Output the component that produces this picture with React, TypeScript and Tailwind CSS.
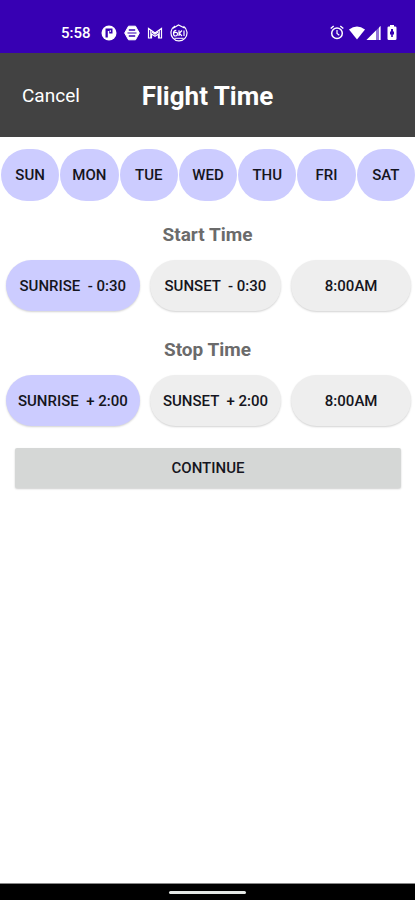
import { useState } from 'react';
import { clsx } from 'clsx';

const DAYS = ['SUN', 'MON', 'TUE', 'WED', 'THU', 'FRI', 'SAT'];

const START_OPTIONS = ['SUNRISE  - 0:30', 'SUNSET  - 0:30', '8:00AM'];
const STOP_OPTIONS = ['SUNRISE  + 2:00', 'SUNSET  + 2:00', '8:00AM'];

export default function App() {
  const [days, setDays] = useState<string[]>(DAYS);
  const [start, setStart] = useState(0);
  const [stop, setStop] = useState(0);

  const toggleDay = (day: string) => {
    setDays((prev) => (prev.includes(day) ? prev.filter((d) => d !== day) : [...prev, day]));
  };

  return (
    <div className="flex min-h-screen flex-col bg-white font-[Roboto,sans-serif] text-[#151520]">
      <StatusBar />

      <header className="grid h-[84px] grid-cols-[1fr_auto_1fr] items-center bg-[#424242] px-[22px] pt-[2px] text-white">
        <button type="button" className="justify-self-start text-[19px] leading-6">
          Cancel
        </button>
        <h1 className="text-[26px] leading-8 font-bold">Flight Time</h1>
      </header>

      <main className="flex-1">
        <div className="grid grid-cols-7 gap-px pt-3 pl-px">
          {DAYS.map((day) => (
            <button
              key={day}
              type="button"
              aria-pressed={days.includes(day)}
              onClick={() => toggleDay(day)}
              className={clsx(
                'h-[52px] rounded-full text-[15px] font-medium',
                days.includes(day) ? 'bg-[#ccccff]' : 'bg-[#eeeeee]',
              )}
            >
              {day}
            </button>
          ))}
        </div>

        <TimeSection title="Start Time" options={START_OPTIONS} selected={start} onSelect={setStart} />
        <TimeSection title="Stop Time" options={STOP_OPTIONS} selected={stop} onSelect={setStop} />

        <div className="pt-[17px] pr-[14px] pl-[15px]">
          <button
            type="button"
            className="h-10 w-full rounded-xs bg-[#d5d7d6] text-[15px] font-medium shadow-[0_1px_2px_rgba(0,0,0,0.2)]"
          >
            CONTINUE
          </button>
        </div>
      </main>

      <footer className="flex h-[17px] items-center justify-center border-t border-[#888888] bg-black pt-px">
        <div className="h-[3px] w-[77px] rounded-full bg-[#e4e8e6]" />
      </footer>
    </div>
  );
}

type TimeSectionProps = {
  title: string;
  options: string[];
  selected: number;
  onSelect: (index: number) => void;
};

function TimeSection({ title, options, selected, onSelect }: TimeSectionProps) {
  return (
    <section className="pt-[22px] pb-[5px]">
      <h2 className="text-center text-[19px] leading-6 font-bold text-[#6b6b6b]">{title}</h2>
      <div className="grid grid-cols-[134fr_132fr_120fr] gap-[10px] pt-[13px] pr-1 pl-[6px]">
        {options.map((label, i) => (
          <button
            key={label}
            type="button"
            aria-pressed={i === selected}
            onClick={() => onSelect(i)}
            className={clsx(
              'h-[51px] rounded-full pt-px text-[15px] font-medium whitespace-pre shadow-[0_1px_2px_rgba(0,0,0,0.18)]',
              i === selected ? 'bg-[#ccccff]' : 'bg-[#eeeeee]',
            )}
          >
            {label}
          </button>
        ))}
      </div>
    </section>
  );
}

function StatusBar() {
  return (
    <div className="flex h-[53px] items-center justify-between bg-[#3700b3] pt-3 pr-[18px] pl-[61px] text-white">
      <div className="flex items-center gap-2">
        <span className="text-[15px] leading-5 font-medium">5:58</span>
        <div className="flex items-center gap-[7px] pl-[2px]">
          <ParkingIcon />
          <HexIcon />
          <MailIcon />
          <BadgeIcon />
        </div>
      </div>
      <div className="flex items-center">
        <AlarmIcon />
        <svg viewBox="0 0 16 14" className="ml-[5px] h-[14px] w-4" fill="currentColor" aria-hidden="true">
          <path d="M0 3.5Q8-2.5 16 3.5L8 13.5Z" />
        </svg>
        <svg viewBox="0 0 15 14" className="ml-px h-[14px] w-[15px]" fill="currentColor" aria-hidden="true">
          <path d="M14.5 0V14H.5Z" opacity=".45" />
          <path d="M10 4.5V14H.5Z" />
          <path d="M14.5 0V14H13V1.5Z" />
        </svg>
        <svg viewBox="0 0 10 15" className="ml-[6px] h-[15px] w-[10px]" fill="currentColor" aria-hidden="true">
          <path
            fillRule="evenodd"
            d="M3 0h4v1.5h1.2q1.3 0 1.3 1.3v10.9q0 1.3-1.3 1.3H1.8Q.5 15 .5 13.7V2.8q0-1.3 1.3-1.3H3ZM4 4v2.5H3v3h1.2V12h1.6V9.5H7v-3H6V4Z"
          />
        </svg>
      </div>
    </div>
  );
}

function ParkingIcon() {
  return (
    <svg viewBox="0 0 16 16" className="size-4" aria-hidden="true">
      <circle cx="8" cy="8" r="7.5" fill="currentColor" />
      <path d="M4.5 3.5H11.5V8.5H8.2V6H6.8V12.5H4.5Z" fill="#3700b3" />
      <path d="M9.3 5.2V7" stroke="currentColor" strokeWidth="1" />
    </svg>
  );
}

function HexIcon() {
  return (
    <svg viewBox="0 0 16 16" className="size-4" aria-hidden="true">
      <path
        d="M4.5 1.2h7L15.3 8l-3.800 6.800h-7L.7 8Z"
        fill="currentColor"
        stroke="currentColor"
        strokeLinejoin="round"
      />
      <path d="M4.800 5h6.400M4.800 11h6.400" stroke="#3700b3" strokeWidth="1.600" />
      <path d="M3.500 8h9" stroke="#3700b3" strokeWidth="1" />
    </svg>
  );
}

function MailIcon() {
  return (
    <svg viewBox="0 0 16 14" className="h-[14px] w-4" fill="none" stroke="currentColor" aria-hidden="true">
      <path d="M1.500 12V2.500L8 7l6.500-4.500V12h-3V8L8 10.300 4.500 8v4Z" strokeWidth="1.200" />
      <path d="M3.800 4v8M12.200 4v8M5 6l3 2.300L11 6" strokeWidth="1.200" />
    </svg>
  );
}

function BadgeIcon() {
  return (
    <svg viewBox="0 0 18 18" className="size-[18px]" fill="none" stroke="currentColor" aria-hidden="true">
      <path d="M5 2A8 8 0 1 0 13.500 2.300" strokeWidth="1.200" />
      <path d="M3 4.200 8.500 1l6 3" strokeWidth="1.200" />
      <path d="M6.300 6.300Q3.500 6.500 3.500 9.300T5.500 12 7.500 10 5.500 8.500 3.600 9.800" strokeWidth="1.200" />
      <path d="M9 6.200v5.800M9 9.500 12 6.500M9.500 9.300 12 12" strokeWidth="1.200" />
      <path d="M14 6.500v5.500" strokeWidth="1.200" />
      <path d="M4.500 14.300h9" strokeWidth="1" />
    </svg>
  );
}

function AlarmIcon() {
  return (
    <svg viewBox="0 0 14 15" className="h-[15px] w-[14px]" fill="none" stroke="currentColor" aria-hidden="true">
      <circle cx="7" cy="8.3" r="5.3" strokeWidth="1.5" />
      <path d="M.7 3.5 3.7 1M13.3 3.5 10.3 1" strokeWidth="1.5" />
      <path d="M7 5v3.5l2.300 1.800" strokeWidth="1.200" />
    </svg>
  );
}
